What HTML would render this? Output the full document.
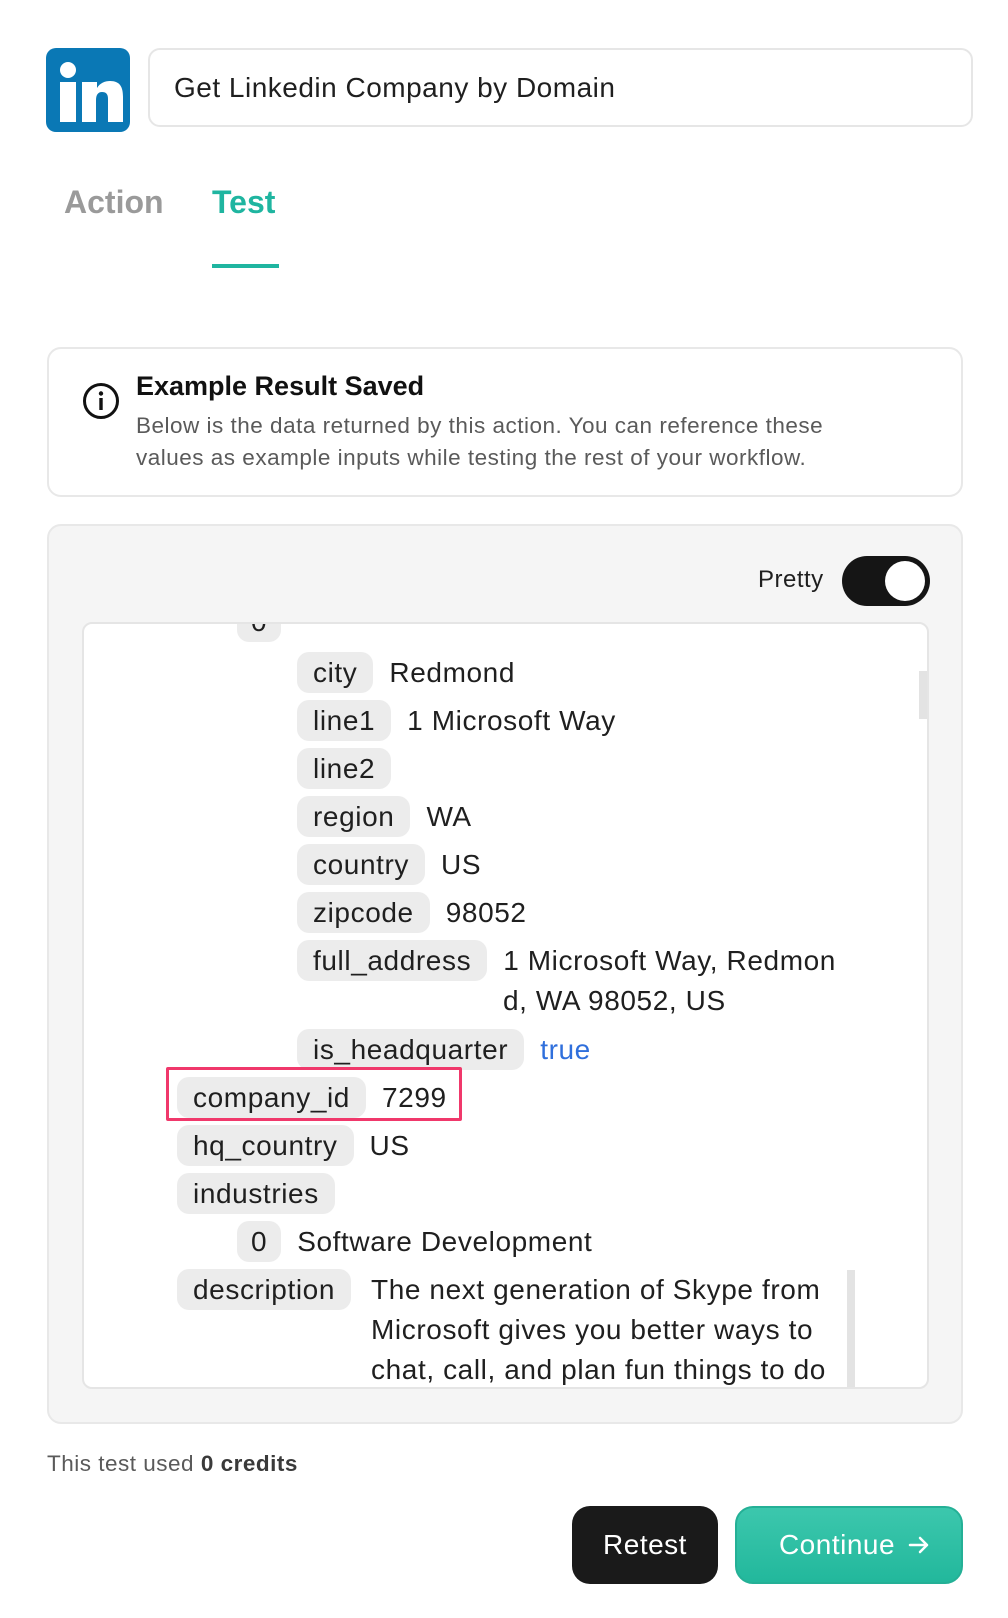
<!DOCTYPE html>
<html><head><meta charset="utf-8"><style>
*{box-sizing:border-box;margin:0;padding:0}
body{width:1008px;height:1618px;background:#fff;font-family:"Liberation Sans",sans-serif;color:#1f1f1f;position:relative;overflow:hidden}
.abs{position:absolute}
.logo{left:46px;top:48px;width:84px;height:84px;background:#0a78b5;border-radius:10px}
.title{left:148px;top:48px;width:825px;height:79px;border:2px solid #e6e6e6;border-radius:12px;font-size:28px;line-height:75px;padding-left:24px;letter-spacing:0.5px}
.tab{font-size:32px;top:184px;font-weight:600}
.card{left:47px;top:347px;width:916px;height:150px;border:2px solid #e8e8e8;border-radius:14px}
.panel{left:47px;top:524px;width:916px;height:900px;background:#f5f5f5;border:2px solid #e8e8e8;border-radius:14px}
.inner{left:82px;top:622px;width:847px;height:767px;background:#fff;border:2px solid #e5e5e5;border-radius:10px;overflow:hidden}
.row{position:absolute;font-size:28px;height:41px;line-height:41px;white-space:nowrap;letter-spacing:0.6px}
.k{display:inline-block;background:#ececec;border-radius:12px;padding:0 16px;margin-right:16px}
.btn{border-radius:18px;font-size:28px;text-align:center;letter-spacing:0.5px}
</style></head><body>
<div class="abs logo"><svg width="84" height="84" viewBox="0 0 84 84"><circle cx="22" cy="22" r="8" fill="#fff"/><rect x="14" y="34" width="16" height="40" fill="#fff"/><path d="M36 34h15v6c3-5 8-7 13-7 10 0 13 6 13 16v25H62V51c0-5-2-7-6-7s-6 3-6 8v22H36z" fill="#fff"/></svg></div>
<div class="abs title">Get Linkedin Company by Domain</div>
<div class="abs tab" style="left:64px;color:#9a9a9a">Action</div>
<div class="abs tab" style="left:212px;color:#1fb5a0">Test</div>
<div class="abs" style="left:212px;top:264px;width:67px;height:4px;background:#1fb5a0"></div>
<div class="abs card">
<svg class="abs" style="left:33px;top:33px" width="38" height="38" viewBox="0 0 38 38"><circle cx="19" cy="19" r="16.5" fill="none" stroke="#111" stroke-width="3"/><circle cx="19" cy="11.5" r="2.2" fill="#111"/><rect x="17.3" y="16" width="3.4" height="12" fill="#111"/></svg>
<div class="abs" style="left:87px;top:22px;font-size:27px;font-weight:700;color:#111">Example Result Saved</div>
<div class="abs" style="left:87px;top:61px;font-size:22.5px;line-height:32px;color:#5a5a5a;white-space:nowrap;letter-spacing:0.5px">Below is the data returned by this action. You can reference these<br>values as example inputs while testing the rest of your workflow.</div>
</div>
<div class="abs panel"></div>
<div class="abs" style="left:758px;top:566px;font-size:24px;letter-spacing:0.5px">Pretty</div>
<div class="abs" style="left:842px;top:556px;width:88px;height:50px;border-radius:25px;background:#151515"><div class="abs" style="right:5px;top:5px;width:40px;height:40px;border-radius:50%;background:#fff"></div></div>
<div class="abs inner">
<div class="abs" style="left:835px;top:47px;width:11px;height:48px;background:#e3e3e3"></div>
<div class="row" style="left:153px;top:-23px"><span class="k" style="padding:0 14px">0</span></div>
<div class="row" style="left:213px;top:28px"><span class="k">city</span>Redmond</div>
<div class="row" style="left:213px;top:76px"><span class="k">line1</span>1 Microsoft Way</div>
<div class="row" style="left:213px;top:124px"><span class="k">line2</span></div>
<div class="row" style="left:213px;top:172px"><span class="k">region</span>WA</div>
<div class="row" style="left:213px;top:220px"><span class="k">country</span>US</div>
<div class="row" style="left:213px;top:268px"><span class="k">zipcode</span>98052</div>
<div class="row" style="left:213px;top:316px"><span class="k">full_address</span>1 Microsoft Way, Redmon</div>
<div class="row" style="left:419px;top:356px">d, WA 98052, US</div>
<div class="row" style="left:213px;top:405px"><span class="k">is_headquarter</span><span style="color:#2f6fdc">true</span></div>
<div class="row" style="left:93px;top:453px"><span class="k">company_id</span>7299</div>
<div class="row" style="left:93px;top:501px"><span class="k">hq_country</span>US</div>
<div class="row" style="left:93px;top:549px"><span class="k">industries</span></div>
<div class="row" style="left:153px;top:597px"><span class="k" style="padding:0 14px">0</span>Software Development</div>
<div class="row" style="left:93px;top:645px"><span class="k">description</span></div>
<div class="abs" style="left:287px;top:646px;font-size:28px;line-height:40px;color:#1f1f1f;white-space:nowrap;letter-spacing:0.6px">The next generation of Skype from<br>Microsoft gives you better ways to<br>chat, call, and plan fun things to do</div>
<div class="abs" style="left:763px;top:646px;width:8px;height:130px;background:#e3e3e3"></div>
</div>
<div class="abs" style="left:166px;top:1067px;width:296px;height:54px;border:3px solid #f0386b;border-radius:2px"></div>
<div class="abs" style="left:47px;top:1451px;font-size:22.5px;color:#5a5a5a;letter-spacing:0.5px">This test used <b style="color:#3a3a3a">0 credits</b></div>
<div class="abs btn" style="left:572px;top:1506px;width:146px;height:78px;background:#1a1a1a;color:#fff;line-height:78px">Retest</div>
<div class="abs btn" style="left:735px;top:1506px;width:228px;height:78px;background:linear-gradient(#3cc7ad,#22b89c);border:2px solid #24b096;color:#fff;line-height:74px;padding-right:24px">Continue<svg class="abs" style="right:30px;top:25px" width="24" height="24" viewBox="0 0 24 24" fill="none" stroke="#fff" stroke-width="2.5" stroke-linecap="round" stroke-linejoin="round"><path d="M3 12h17M13 5l7 7-7 7"/></svg></div>
</body></html>
